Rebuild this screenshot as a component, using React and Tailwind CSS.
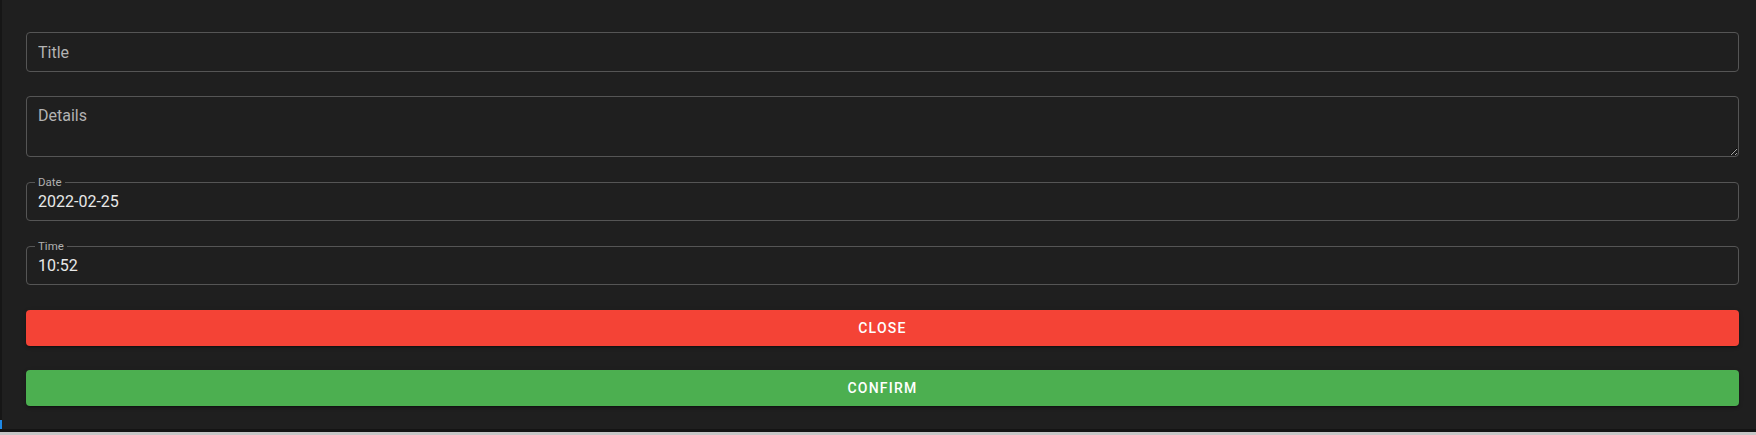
export default function App() {
  return (
    <div className="h-[435px] w-full flex flex-col bg-[#1f1f1f] font-['Roboto',sans-serif] overflow-hidden">
      <div className="flex flex-1 min-h-0">
        {/* left edge */}
        <div className="w-[2px] flex flex-col">
          <div className="flex-1 bg-[#161616]" />
          <div className="h-[9px] bg-[#1e88e5]" />
        </div>

        <div className="flex-1 flex flex-col pl-[24px] pr-[17px] pt-[32px] pb-[23px]">
          {/* Title */}
          <input
            type="text"
            placeholder="Title"
            className="h-[40px] w-full rounded-[4px] border border-[#555] bg-transparent px-[11px] text-[16px] text-[#e8e8e8] placeholder:text-[#b3b3b3] outline-none"
          />

          {/* Details */}
          <textarea
            placeholder="Details"
            className="mt-[24px] h-[61px] w-full rounded-[4px] border border-[#555] bg-transparent px-[11px] pt-[9px] text-[16px] leading-[19px] text-[#e8e8e8] placeholder:text-[#b3b3b3] outline-none [color-scheme:dark]"
          />

          {/* Date */}
          <div className="relative mt-[25px] h-[39px] rounded-[4px] border border-[#555] flex items-center">
            <span className="absolute -top-[7px] left-[8px] px-[3px] bg-[#1f1f1f] text-[11.5px] leading-[12px] text-[#b0b0b0]">
              Date
            </span>
            <span className="pl-[11px] text-[16px] text-[#e8e8e8]">2022-02-25</span>
          </div>

          {/* Time */}
          <div className="relative mt-[25px] h-[39px] rounded-[4px] border border-[#555] flex items-center">
            <span className="absolute -top-[7px] left-[8px] px-[3px] bg-[#1f1f1f] text-[11.5px] leading-[12px] text-[#b0b0b0]">
              Time
            </span>
            <span className="pl-[11px] text-[16px] text-[#e8e8e8]">10:52</span>
          </div>

          <button className="mt-[25px] h-[36px] w-full rounded-[4px] bg-[#f44336] text-[14px] font-medium tracking-[1.25px] text-white shadow-[0_3px_1px_-2px_rgba(0,0,0,0.2),0_2px_2px_0_rgba(0,0,0,0.14),0_1px_5px_0_rgba(0,0,0,0.12)]">
            CLOSE
          </button>

          <button className="mt-[24px] h-[36px] w-full rounded-[4px] bg-[#4caf50] text-[14px] font-medium tracking-[1.25px] text-white shadow-[0_3px_1px_-2px_rgba(0,0,0,0.2),0_2px_2px_0_rgba(0,0,0,0.14),0_1px_5px_0_rgba(0,0,0,0.12)]">
            CONFIRM
          </button>
        </div>
      </div>
      <div className="h-[3px] bg-[#141414]" />
      <div className="h-[3px] bg-[#c6c6c6]" />
    </div>
  );
}
